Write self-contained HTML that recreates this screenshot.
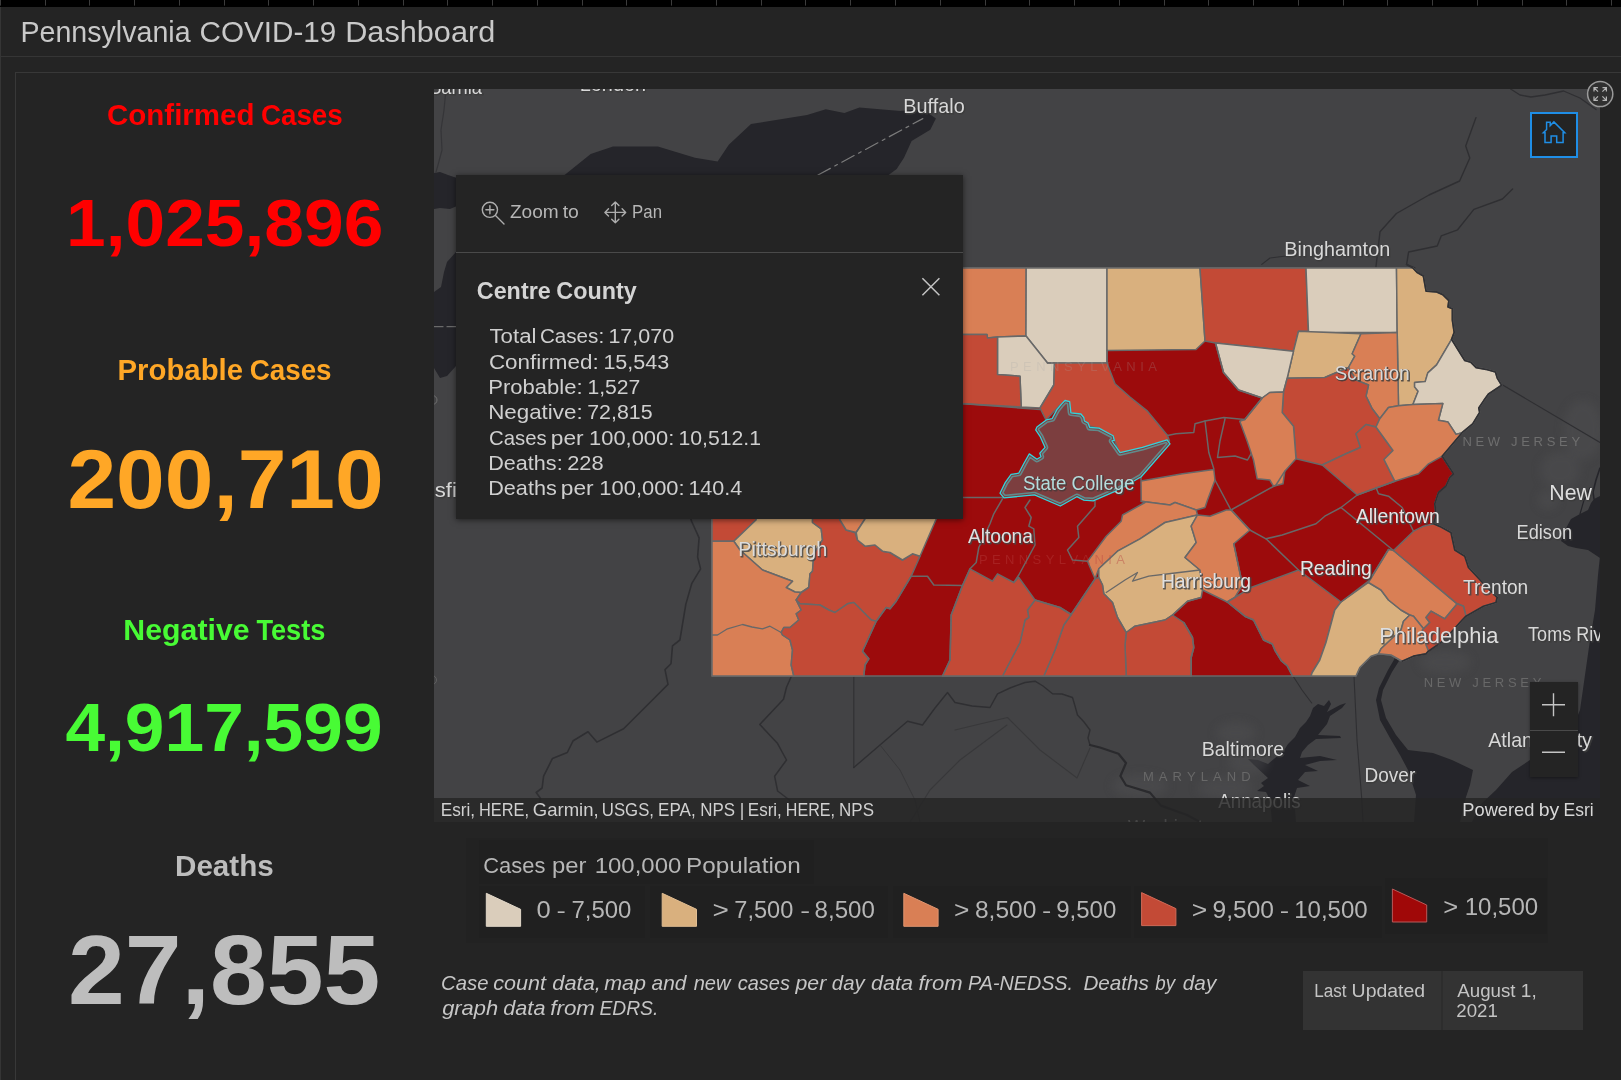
<!DOCTYPE html>
<html lang="en"><head><meta charset="utf-8"><title>Pennsylvania COVID-19 Dashboard</title>
<style>
html,body{margin:0;padding:0;background:#242424;}
body{width:1621px;height:1080px;overflow:hidden;position:relative;font-family:"Liberation Sans",sans-serif;color:#c8c8c8;}
.abs{position:absolute;}
#topbar{left:0;top:0;width:1621px;height:7px;background:#000;}
#header{left:0;top:7px;width:1621px;height:48px;background:#242424;border-bottom:1px solid #353535;border-left:1px solid #353535;box-sizing:border-box;height:50px;}
#panel{left:15px;top:72px;width:1620px;height:1020px;border:1px solid #383838;box-sizing:border-box;background:#242424;}
#map{left:434px;top:89px;width:1166px;height:733px;overflow:hidden;background:#434345;}
#map svg{opacity:0.999;}
#attr{left:434px;top:798px;width:1166px;height:24px;background:rgba(36,36,36,0.82);}
#popup{left:456px;top:175px;width:507px;height:344px;background:#242424;box-shadow:0 1px 6px rgba(0,0,0,0.55);}
#popup .div{position:absolute;left:0;top:77px;width:507px;height:1px;background:#4a4a4a;}
#home{left:1530px;top:112px;width:48px;height:46px;background:#242424;border:2px solid #1f8ee6;box-sizing:border-box;}
#zoom{left:1530px;top:682px;width:48px;height:95px;background:#242424;box-shadow:0 1px 3px rgba(0,0,0,0.4);}
#zoom .div{position:absolute;left:0;top:48px;width:48px;height:1px;background:#4a4a4a;}
#legend{left:466px;top:838px;width:1082px;height:105px;background:#222222;}
.lg{background:#202020;}
#lu1{left:1303px;top:971px;width:280px;height:59px;background:#333333;}
#lu2{left:1441px;top:971px;width:2px;height:59px;background:#2d2d2d;}
#lborder{left:0;top:7px;width:1px;height:1073px;background:#353535;}
svg text{font-family:"Liberation Sans",sans-serif;}
#ov{left:0;top:0;opacity:0.999;}
</style></head><body>

<div id="topbar" class="abs"></div><div id="lborder" class="abs"></div>
<div id="header" class="abs"></div>
<div id="panel" class="abs"></div>
<svg class="abs" style="left:0;top:0" width="1621" height="7"><rect x="0" y="0" width="1" height="5.6" fill="#3c3c3c"/><rect x="45" y="0" width="1" height="5.6" fill="#3c3c3c"/><rect x="89" y="0" width="1" height="5.6" fill="#3c3c3c"/><rect x="134" y="0" width="1" height="5.6" fill="#3c3c3c"/><rect x="179" y="0" width="1" height="5.6" fill="#3c3c3c"/><rect x="224" y="0" width="1" height="5.6" fill="#3c3c3c"/><rect x="268" y="0" width="1" height="5.6" fill="#3c3c3c"/><rect x="313" y="0" width="1" height="5.6" fill="#3c3c3c"/><rect x="358" y="0" width="1" height="5.6" fill="#3c3c3c"/><rect x="403" y="0" width="1" height="5.6" fill="#3c3c3c"/><rect x="447" y="0" width="1" height="5.6" fill="#3c3c3c"/><rect x="492" y="0" width="1" height="5.6" fill="#3c3c3c"/><rect x="537" y="0" width="1" height="5.6" fill="#3c3c3c"/><rect x="582" y="0" width="1" height="5.6" fill="#3c3c3c"/><rect x="626" y="0" width="1" height="5.6" fill="#3c3c3c"/><rect x="671" y="0" width="1" height="5.6" fill="#3c3c3c"/><rect x="716" y="0" width="1" height="5.6" fill="#3c3c3c"/><rect x="761" y="0" width="1" height="5.6" fill="#3c3c3c"/><rect x="805" y="0" width="1" height="5.6" fill="#3c3c3c"/><rect x="850" y="0" width="1" height="5.6" fill="#3c3c3c"/><rect x="895" y="0" width="1" height="5.6" fill="#3c3c3c"/><rect x="940" y="0" width="1" height="5.6" fill="#3c3c3c"/><rect x="985" y="0" width="1" height="5.6" fill="#3c3c3c"/><rect x="1029" y="0" width="1" height="5.6" fill="#3c3c3c"/><rect x="1074" y="0" width="1" height="5.6" fill="#3c3c3c"/><rect x="1119" y="0" width="1" height="5.6" fill="#3c3c3c"/><rect x="1164" y="0" width="1" height="5.6" fill="#3c3c3c"/><rect x="1208" y="0" width="1" height="5.6" fill="#3c3c3c"/><rect x="1253" y="0" width="1" height="5.6" fill="#3c3c3c"/><rect x="1298" y="0" width="1" height="5.6" fill="#3c3c3c"/><rect x="1343" y="0" width="1" height="5.6" fill="#3c3c3c"/><rect x="1387" y="0" width="1" height="5.6" fill="#3c3c3c"/><rect x="1432" y="0" width="1" height="5.6" fill="#3c3c3c"/><rect x="1477" y="0" width="1" height="5.6" fill="#3c3c3c"/><rect x="1522" y="0" width="1" height="5.6" fill="#3c3c3c"/><rect x="1566" y="0" width="1" height="5.6" fill="#3c3c3c"/><rect x="1611" y="0" width="1" height="5.6" fill="#3c3c3c"/></svg>
<div id="map" class="abs"><svg width="1166" height="733" viewBox="434 89 1166 733">
<defs><filter id="bl" x="-30%" y="-30%" width="160%" height="160%" color-interpolation-filters="sRGB"><feGaussianBlur stdDeviation="5"/></filter></defs>
<polygon points="434.0,292.0 441.0,287.0 444.0,272.0 447.0,262.0 456.0,252.0 500.0,222.0 564.6,175.0 590.7,154.0 613.0,146.6 657.9,146.6 695.0,157.8 717.6,161.5 728.8,144.7 751.0,124.0 807.0,114.9 825.8,109.3 844.4,113.0 859.4,107.4 900.4,111.0 922.8,109.3 935.9,118.6 930.3,129.8 911.6,141.0 904.0,157.8 896.7,169.0 881.8,180.0 760.0,262.0 600.0,340.0 456.0,366.0 447.0,376.0 440.0,378.0 434.0,368.0" fill="#25252a" stroke="none" stroke-width="0" stroke-linejoin="round" />
<polygon points="434.0,173.0 440.0,172.0 448.0,175.0 457.0,178.0 457.0,206.0 450.0,209.0 440.0,208.0 434.0,209.0" fill="#25252a" stroke="none" stroke-width="0" stroke-linejoin="round" />
<polyline points="818.0,175.0 922.8,118.6" fill="none" stroke="#7c7c7c" stroke-width="1.2" stroke-linejoin="round" stroke-linecap="round" stroke-dasharray="14 5 3 5"/>
<polyline points="434.0,326.7 456.0,326.7" fill="none" stroke="#6a6a6a" stroke-width="1.2" stroke-linejoin="round" stroke-linecap="round" stroke-dasharray="9 4"/>
<polyline points="446.0,89.0 444.0,110.0 441.0,130.0 442.0,150.0 438.0,165.0 436.0,172.0" fill="none" stroke="#353538" stroke-width="1.2" stroke-linejoin="round" stroke-linecap="round" />
<polygon points="1313.0,708.0 1318.0,704.0 1324.0,706.0 1329.0,700.0 1331.0,704.0 1327.0,712.0 1340.0,705.0 1346.0,703.0 1342.0,708.0 1330.0,716.0 1327.0,724.0 1322.0,730.0 1318.0,735.0 1340.0,736.0 1341.0,738.0 1316.0,739.0 1308.0,745.0 1302.0,752.0 1300.0,758.0 1320.0,756.0 1337.0,760.0 1320.0,761.0 1305.0,765.0 1318.0,771.0 1305.0,772.0 1298.0,780.0 1310.0,786.0 1297.0,788.0 1294.0,797.0 1296.0,822.0 1272.0,822.0 1270.0,800.0 1266.0,792.0 1257.0,791.0 1264.0,786.0 1261.0,783.0 1268.0,778.0 1254.0,765.0 1248.0,759.0 1258.0,760.0 1268.0,764.0 1275.0,758.0 1283.0,752.0 1288.0,744.0 1295.0,737.0 1300.0,728.0 1306.0,722.0 1310.0,716.0" fill="#25252a" stroke="none" stroke-width="0" stroke-linejoin="round" />
<polygon points="1399.0,661.0 1392.0,672.0 1383.0,690.0 1381.0,700.0 1386.0,718.0 1396.0,735.0 1408.0,750.0 1433.0,753.0 1452.0,760.0 1473.0,770.0 1470.0,785.0 1466.0,797.0 1460.0,822.0 1414.0,822.0 1416.0,795.0 1408.0,770.0 1400.0,755.0 1390.0,738.0 1380.0,720.0 1376.0,700.0 1379.0,688.0 1388.0,670.0 1395.0,658.0" fill="#25252a" stroke="none" stroke-width="0" stroke-linejoin="round" />
<polygon points="1600.0,556.0 1598.0,575.0 1595.0,610.0 1590.0,640.0 1585.0,675.0 1580.0,710.0 1572.0,730.0 1552.0,748.0 1530.0,760.0 1512.0,772.0 1496.0,790.0 1480.0,805.0 1472.0,822.0 1600.0,822.0" fill="#25252a" stroke="none" stroke-width="0" stroke-linejoin="round" />
<polygon points="1600.0,496.0 1594.0,499.0 1591.0,503.0 1588.0,510.0 1580.0,514.0 1571.0,519.0 1565.0,530.0 1561.0,541.0 1568.0,546.0 1576.0,548.0 1588.0,550.0 1594.0,554.0 1600.0,558.0" fill="#25252a" stroke="none" stroke-width="0" stroke-linejoin="round" />
<polyline points="1600.0,468.0 1596.0,480.0 1593.0,492.0 1594.0,499.0" fill="none" stroke="#25252a" stroke-width="1.6" stroke-linejoin="round" stroke-linecap="round" />
<polyline points="1580.0,514.0 1584.0,500.0 1590.0,488.0" fill="none" stroke="#25252a" stroke-width="1.2" stroke-linejoin="round" stroke-linecap="round" />
<g fill="#535355" opacity="0.38" filter="url(#bl)"><ellipse cx="1583" cy="430" rx="20" ry="30"/><ellipse cx="1560" cy="470" rx="20" ry="18"/><ellipse cx="1548" cy="500" rx="10" ry="10"/><ellipse cx="1236" cy="733" rx="20" ry="11"/><ellipse cx="1248" cy="762" rx="20" ry="13"/><ellipse cx="1225" cy="788" rx="28" ry="11"/><ellipse cx="1140" cy="786" rx="28" ry="12"/><ellipse cx="1445" cy="662" rx="26" ry="12"/></g>
<polyline points="1501.0,384.0 1600.0,442.5" fill="none" stroke="#2f2f32" stroke-width="1.2" stroke-linejoin="round" stroke-linecap="round" />
<polyline points="1476.0,117.6 1465.7,146.0 1469.8,158.0 1459.6,181.0 1429.0,195.0 1396.4,213.5 1380.0,231.8 1376.0,266.5" fill="none" stroke="#2f2f32" stroke-width="1.4" stroke-linejoin="round" stroke-linecap="round" />
<polyline points="1512.6,189.0 1502.4,199.0 1473.9,209.4 1457.6,229.8 1441.2,235.9 1437.2,246.0 1408.6,252.0 1406.6,264.4 1414.8,268.0" fill="none" stroke="#2f2f32" stroke-width="1.4" stroke-linejoin="round" stroke-linecap="round" />
<polyline points="1261.8,264.4 1270.0,258.0 1286.0,256.0" fill="none" stroke="#2f2f32" stroke-width="1.2" stroke-linejoin="round" stroke-linecap="round" />
<polyline points="1510.6,89.0 1520.0,95.0 1531.0,97.0 1545.0,95.0 1563.6,91.0 1580.0,98.0 1596.0,109.5" fill="none" stroke="#2f2f32" stroke-width="1.3" stroke-linejoin="round" stroke-linecap="round" />
<polyline points="688.0,510.0 691.7,521.5 699.1,537.8 697.6,557.0 700.6,568.9 691.7,583.7 685.8,604.4 679.9,640.0 672.5,645.9 671.0,663.7 665.0,669.6 668.0,684.4 653.2,699.2 638.4,714.0 623.6,728.8 596.9,742.1 588.0,731.8 573.2,740.7 567.3,752.5 552.5,758.4 543.6,776.2 542.1,788.0 536.2,792.5 540.6,798.4 538.0,810.0" fill="none" stroke="#2f2f32" stroke-width="1.6" stroke-linejoin="round" stroke-linecap="round" />
<polyline points="853.8,676.0 853.8,767.5" fill="none" stroke="#2f2f32" stroke-width="1.1" stroke-linejoin="round" stroke-linecap="round" />
<polyline points="791.5,676.0 786.5,687.3 783.5,699.2 759.8,724.4 777.6,743.6 786.5,760.0 774.6,776.2 777.6,791.0 789.4,800.0 795.0,815.0" fill="none" stroke="#2f2f32" stroke-width="1.5" stroke-linejoin="round" stroke-linecap="round" />
<polyline points="853.8,767.5 880.0,745.0 907.5,721.2 922.5,725.0 935.0,708.0 947.5,692.5 955.0,702.5 972.0,706.0 990.0,707.5 997.5,693.8 1010.0,688.0 1025.0,682.5 1035.0,681.2 1043.0,686.0 1052.5,693.8 1062.0,694.0 1072.5,697.5 1075.0,706.0 1077.5,715.0 1084.0,722.0 1090.0,730.0 1088.0,738.0 1090.0,745.0" fill="none" stroke="#2f2f32" stroke-width="1.4" stroke-linejoin="round" stroke-linecap="round" />
<polyline points="1090.0,745.0 1100.0,747.5 1118.5,753.7 1126.0,763.0 1120.4,776.0 1126.0,785.2 1150.0,792.6 1161.0,805.6 1187.0,815.0 1200.0,822.0" fill="none" stroke="#2a2a2d" stroke-width="2.2" stroke-linejoin="round" stroke-linecap="round" />
<polyline points="955.0,730.0 980.0,724.0 1007.5,717.5 1040.0,750.0 1077.0,778.0 1090.0,748.0" fill="none" stroke="#38383a" stroke-width="1.1" stroke-linejoin="round" stroke-linecap="round" />
<polyline points="1007.0,725.0 960.0,760.0 930.0,790.0 910.0,822.0" fill="none" stroke="#38383a" stroke-width="1.1" stroke-linejoin="round" stroke-linecap="round" />
<polyline points="880.0,745.0 900.0,770.0 915.0,800.0 920.0,822.0" fill="none" stroke="#38383a" stroke-width="1.0" stroke-linejoin="round" stroke-linecap="round" />
<polyline points="1354.0,676.0 1357.0,740.0 1361.7,798.0 1363.0,822.0" fill="none" stroke="#2f2f32" stroke-width="1.1" stroke-linejoin="round" stroke-linecap="round" />
<polyline points="1293.0,676.0 1302.0,690.0 1311.7,703.0" fill="none" stroke="#2f2f32" stroke-width="1.1" stroke-linejoin="round" stroke-linecap="round" />
<circle cx="432.5" cy="400" r="4.5" fill="none" stroke="#707070" stroke-width="1"/><circle cx="432" cy="680" r="4.5" fill="none" stroke="#606060" stroke-width="1"/>
<polygon points="712.0,268.0 1412.9,268.0 1417.3,272.6 1423.4,276.1 1426.1,291.1 1436.6,291.9 1442.8,294.6 1448.9,300.7 1448.0,306.9 1452.4,308.7 1452.4,320.1 1454.2,332.4 1451.6,339.4 1460.4,353.5 1464.8,360.5 1470.9,362.3 1476.2,367.6 1485.9,369.3 1495.5,372.0 1497.3,378.1 1501.7,385.2 1488.5,394.0 1484.1,400.1 1478.8,408.0 1479.7,412.4 1472.7,423.9 1462.1,432.7 1442.2,456.2 1453.5,473.8 1449.8,477.5 1446.0,486.0 1438.5,492.5 1434.8,503.8 1436.0,515.0 1433.5,523.8 1441.0,527.0 1451.0,532.5 1454.8,550.0 1464.8,556.2 1468.5,567.5 1484.8,585.0 1497.2,597.5 1496.0,602.5 1483.5,606.2 1466.0,616.2 1462.2,620.0 1451.0,632.5 1441.0,642.5 1428.5,651.2 1426.0,653.8 1413.5,656.2 1402.2,661.2 1391.0,655.0 1378.5,653.8 1371.0,656.2 1359.8,667.5 1356.0,676.0 712.0,676.0" fill="#9c0b0c" stroke="#686868" stroke-width="1.6" stroke-linejoin="round" />
<polygon points="960.0,268.0 1026.2,268.0 1026.0,336.0 997.5,337.0 987.5,338.0 987.0,334.5 960.0,334.5" fill="#d97f55" stroke="#686868" stroke-width="1.5" stroke-linejoin="round" />
<polygon points="1026.2,268.0 1107.0,268.0 1107.0,363.0 1047.5,363.0 1026.0,336.0" fill="#dacdbb" stroke="#686868" stroke-width="1.5" stroke-linejoin="round" />
<polygon points="1107.0,268.0 1200.0,268.0 1205.0,341.0 1196.0,349.5 1107.0,350.5" fill="#d9b07e" stroke="#686868" stroke-width="1.5" stroke-linejoin="round" />
<polygon points="1200.0,268.0 1306.0,268.0 1308.5,331.2 1298.5,331.2 1293.5,351.2 1215.5,343.0 1205.0,341.0" fill="#c34a36" stroke="#686868" stroke-width="1.5" stroke-linejoin="round" />
<polygon points="1306.0,268.0 1396.5,268.0 1397.2,332.5 1308.5,332.5" fill="#dacdbb" stroke="#686868" stroke-width="1.5" stroke-linejoin="round" />
<polygon points="1396.5,268.0 1412.9,268.0 1417.3,272.6 1423.4,276.1 1426.1,291.1 1436.6,291.9 1442.8,294.6 1448.9,300.7 1448.0,306.9 1452.4,308.7 1452.4,320.1 1454.2,332.4 1451.6,339.4 1436.6,364.9 1427.8,372.9 1425.2,381.6 1414.6,382.5 1414.6,386.9 1418.1,391.3 1412.9,404.5 1398.5,405.8 1397.2,332.5" fill="#d9b07e" stroke="#686868" stroke-width="1.5" stroke-linejoin="round" />
<polygon points="1451.6,339.4 1460.4,353.5 1464.8,360.5 1470.9,362.3 1476.2,367.6 1485.9,369.3 1495.5,372.0 1497.3,378.1 1501.7,385.2 1488.5,394.0 1484.1,400.1 1478.8,408.0 1479.7,412.4 1472.7,423.9 1462.1,432.7 1456.0,434.4 1448.0,422.1 1438.4,420.3 1442.8,403.6 1412.9,404.5 1418.1,391.3 1414.6,386.9 1414.6,382.5 1425.2,381.6 1427.8,372.9 1436.6,364.9" fill="#dacdbb" stroke="#686868" stroke-width="1.5" stroke-linejoin="round" />
<polygon points="1298.5,331.2 1361.0,333.8 1352.2,353.8 1354.8,356.2 1348.5,367.5 1324.8,377.5 1287.2,378.2 1293.5,351.2" fill="#d9b07e" stroke="#686868" stroke-width="1.5" stroke-linejoin="round" />
<polygon points="1361.0,333.8 1397.2,332.5 1398.5,405.8 1388.5,407.5 1379.8,418.8 1372.2,408.8 1366.0,396.2 1368.5,385.0 1356.0,380.0 1348.5,367.5 1354.8,356.2 1352.2,353.8" fill="#d97f55" stroke="#686868" stroke-width="1.5" stroke-linejoin="round" />
<polygon points="1215.5,343.0 1293.5,351.2 1287.2,378.2 1283.5,392.0 1269.8,392.5 1262.2,398.0 1238.5,390.0 1223.5,372.5" fill="#dacdbb" stroke="#686868" stroke-width="1.5" stroke-linejoin="round" />
<polygon points="1287.2,378.2 1324.8,377.5 1348.5,367.5 1356.0,380.0 1368.5,385.0 1366.0,396.2 1372.2,408.8 1379.8,418.8 1376.0,427.0 1366.0,424.5 1356.0,433.8 1360.5,447.5 1346.0,453.8 1322.2,465.0 1296.0,458.8 1293.5,426.2 1282.2,412.5 1283.5,392.0" fill="#c34a36" stroke="#686868" stroke-width="1.5" stroke-linejoin="round" />
<polygon points="1262.2,398.0 1269.8,392.5 1283.5,392.0 1282.2,412.5 1293.5,426.2 1296.0,458.8 1284.8,471.2 1283.0,483.8 1273.5,486.2 1269.8,480.0 1257.2,478.8 1253.5,460.0 1247.2,441.2 1239.8,421.2 1244.8,419.5" fill="#d97f55" stroke="#686868" stroke-width="1.5" stroke-linejoin="round" />
<polygon points="1366.0,424.5 1376.0,427.0 1393.0,450.5 1384.0,459.5 1394.8,481.2 1357.2,495.0 1322.2,465.0 1346.0,453.8 1360.5,447.5 1356.0,433.8" fill="#c34a36" stroke="#686868" stroke-width="1.5" stroke-linejoin="round" />
<polygon points="1376.0,427.0 1379.8,418.8 1388.5,407.5 1398.5,405.8 1412.9,404.5 1442.8,403.6 1438.4,420.3 1448.0,422.1 1456.0,434.4 1462.1,432.7 1442.2,456.2 1428.5,463.8 1418.5,473.8 1394.8,481.2 1384.0,459.5 1393.0,450.5" fill="#d97f55" stroke="#686868" stroke-width="1.5" stroke-linejoin="round" />
<polygon points="997.5,337.0 1026.0,336.0 1047.5,363.0 1054.5,363.0 1053.8,385.0 1040.0,408.0 1021.2,407.0 1020.0,376.2 997.5,374.5" fill="#dacdbb" stroke="#686868" stroke-width="1.5" stroke-linejoin="round" />
<polygon points="960.0,334.5 987.0,334.5 987.5,338.0 997.5,337.0 997.5,374.5 1020.0,376.2 1021.2,407.0 960.0,403.5" fill="#c34a36" stroke="#686868" stroke-width="1.5" stroke-linejoin="round" />
<polygon points="1047.5,363.0 1107.0,363.0 1115.0,383.8 1130.0,397.0 1147.5,411.2 1167.5,435.5 1169.5,441.0 1120.0,453.8 1113.8,438.8 1100.0,428.8 1086.0,425.0 1080.0,415.0 1070.0,412.5 1066.0,401.0 1060.0,405.0 1046.0,420.0 1040.0,408.0 1053.8,385.0 1054.5,363.0" fill="#c34a36" stroke="#686868" stroke-width="1.5" stroke-linejoin="round" />
<polygon points="1141.0,481.0 1182.5,473.8 1213.8,469.5 1215.0,480.0 1207.5,500.0 1205.0,507.5 1196.2,510.0 1175.0,502.5 1170.0,505.0 1141.2,501.2" fill="#d97f55" stroke="#686868" stroke-width="1.5" stroke-linejoin="round" />
<polygon points="1141.2,501.2 1170.0,505.0 1175.0,502.5 1196.2,510.0 1197.5,515.0 1165.0,522.5 1140.0,538.8 1117.5,551.2 1098.8,568.8 1095.0,578.8 1087.5,561.2 1106.2,536.2 1121.2,521.2 1122.5,515.0 1145.0,502.5" fill="#d97f55" stroke="#686868" stroke-width="1.5" stroke-linejoin="round" />
<polygon points="1098.8,577.5 1098.8,568.8 1117.5,551.2 1140.0,538.8 1165.0,522.5 1197.5,515.0 1191.2,526.2 1196.2,542.5 1185.0,557.5 1200.0,570.0 1202.5,590.0 1201.2,597.5 1187.5,601.2 1172.5,615.0 1165.0,620.0 1135.0,626.2 1126.2,632.5 1117.5,617.5 1112.5,602.5 1103.8,593.8 1102.5,585.0" fill="#d9b07e" stroke="#686868" stroke-width="1.5" stroke-linejoin="round" />
<polyline points="1106.2,592.5 1125.0,580.0 1137.5,572.5 1132.5,581.2 1148.8,576.2 1175.0,573.0 1200.0,570.0" fill="none" stroke="#686868" stroke-width="1.3" stroke-linejoin="round" stroke-linecap="round" />
<polygon points="1197.5,515.0 1210.0,516.2 1226.2,510.0 1231.2,510.0 1250.0,530.0 1233.8,543.8 1242.5,585.0 1234.8,597.5 1227.2,602.0 1202.5,590.0 1200.0,570.0 1185.0,557.5 1196.2,542.5 1191.2,526.2" fill="#d97f55" stroke="#686868" stroke-width="1.5" stroke-linejoin="round" />
<polygon points="1227.2,602.0 1234.8,597.5 1251.0,587.5 1298.5,570.0 1341.0,602.0 1334.8,610.0 1326.0,642.5 1319.8,660.0 1312.2,672.5 1311.0,676.0 1292.5,676.0 1287.1,665.7 1281.2,660.7 1275.2,650.9 1272.3,644.0 1263.5,640.0 1253.5,620.0 1244.8,616.2" fill="#c34a36" stroke="#686868" stroke-width="1.5" stroke-linejoin="round" />
<polygon points="1368.5,582.5 1381.0,590.0 1388.5,600.0 1401.0,610.0 1409.8,615.0 1403.5,621.2 1401.0,630.0 1381.0,648.8 1378.5,653.8 1371.0,656.2 1359.8,667.5 1356.0,676.0 1311.0,676.0 1312.2,672.5 1319.8,660.0 1326.0,642.5 1334.8,610.0 1341.0,602.0" fill="#d9b07e" stroke="#686868" stroke-width="1.5" stroke-linejoin="round" />
<polygon points="1388.5,549.5 1393.5,550.5 1457.2,603.8 1444.8,618.8 1431.0,611.2 1426.0,617.5 1429.8,622.5 1423.5,628.8 1413.5,616.2 1409.8,615.0 1401.0,610.0 1388.5,600.0 1381.0,590.0 1368.5,582.5 1369.8,580.0" fill="#d97f55" stroke="#686868" stroke-width="1.5" stroke-linejoin="round" />
<polygon points="1413.5,531.2 1423.5,526.2 1433.5,523.8 1441.0,527.0 1451.0,532.5 1454.8,550.0 1464.8,556.2 1468.5,567.5 1484.8,585.0 1497.2,597.5 1496.0,602.5 1483.5,606.2 1466.0,616.2 1463.5,606.2 1457.2,603.8 1393.5,550.5" fill="#c34a36" stroke="#686868" stroke-width="1.5" stroke-linejoin="round" />
<polygon points="1457.2,603.8 1463.5,606.2 1466.0,616.2 1462.2,620.0 1451.0,632.5 1441.0,642.5 1428.5,651.2 1426.0,645.0 1422.2,630.0 1423.5,628.8 1429.8,622.5 1426.0,617.5 1431.0,611.2 1444.8,618.8" fill="#c34a36" stroke="#686868" stroke-width="1.5" stroke-linejoin="round" />
<polygon points="1409.8,615.0 1413.5,616.2 1423.5,628.8 1422.2,630.0 1426.0,645.0 1428.5,651.2 1426.0,653.8 1413.5,656.2 1402.2,661.2 1391.0,655.0 1378.5,653.8 1381.0,648.8 1401.0,630.0 1403.5,621.2" fill="#d97f55" stroke="#686868" stroke-width="1.5" stroke-linejoin="round" />
<polygon points="1126.2,632.5 1135.0,626.2 1165.0,620.0 1172.5,615.0 1183.8,622.5 1192.5,637.5 1193.8,647.5 1191.2,657.5 1191.2,676.0 1126.2,676.0 1125.0,645.0" fill="#c34a36" stroke="#686868" stroke-width="1.5" stroke-linejoin="round" />
<polygon points="1071.2,614.5 1095.0,578.8 1098.8,577.5 1102.5,585.0 1103.8,593.8 1112.5,602.5 1117.5,617.5 1126.2,632.5 1125.0,645.0 1126.2,676.0 1043.8,676.0 1055.0,650.0 1063.8,625.0" fill="#c34a36" stroke="#686868" stroke-width="1.5" stroke-linejoin="round" />
<polygon points="1035.0,600.0 1060.0,607.5 1071.2,614.5 1063.8,625.0 1055.0,650.0 1043.8,676.0 1002.5,676.0 1020.0,642.5 1025.0,620.0 1028.8,617.5 1027.5,610.0" fill="#c34a36" stroke="#686868" stroke-width="1.5" stroke-linejoin="round" />
<polygon points="970.0,568.8 992.5,581.2 997.5,573.8 1013.8,582.5 1018.8,577.5 1035.0,600.0 1027.5,610.0 1028.8,617.5 1025.0,620.0 1020.0,642.5 1002.5,676.0 942.5,676.0 950.0,660.0 951.2,615.0 962.5,585.5" fill="#c34a36" stroke="#686868" stroke-width="1.5" stroke-linejoin="round" />
<polygon points="712.0,500.0 760.0,500.0 756.0,520.0 733.8,541.2 712.0,541.2" fill="#c34a36" stroke="#686868" stroke-width="1.5" stroke-linejoin="round" />
<polygon points="756.0,520.0 760.0,500.0 813.0,500.0 812.5,522.5 821.2,528.8 822.5,540.0 813.8,553.8 812.5,571.2 810.0,573.8 808.8,587.5 801.2,592.5 795.0,592.0 786.2,587.5 792.5,581.2 762.5,570.0 740.0,550.0 733.8,541.2" fill="#d9b07e" stroke="#686868" stroke-width="1.5" stroke-linejoin="round" />
<polygon points="712.0,541.2 733.8,541.2 740.0,550.0 762.5,570.0 792.5,581.2 786.2,587.5 795.0,592.0 801.2,592.5 796.2,600.0 801.2,610.0 796.2,613.8 798.8,620.0 790.0,627.5 783.8,627.5 781.2,632.5 782.5,635.0 790.0,640.0 792.5,650.0 791.2,665.0 793.8,676.0 712.0,676.0" fill="#d97f55" stroke="#686868" stroke-width="1.5" stroke-linejoin="round" />
<polyline points="712.0,635.0 717.5,635.0 727.5,628.8 742.5,624.5 752.0,627.0 762.5,628.8 770.0,626.2 781.2,632.5" fill="none" stroke="#686868" stroke-width="1.3" stroke-linejoin="round" stroke-linecap="round" />
<polygon points="813.0,500.0 840.0,500.0 840.0,520.0 846.2,530.0 855.0,532.5 857.5,540.0 865.0,546.2 875.0,545.0 882.5,551.2 890.0,552.5 902.5,560.0 912.5,553.8 920.0,556.2 911.2,576.2 896.2,601.2 890.0,608.8 886.2,607.5 876.2,621.2 871.2,620.0 853.8,602.5 847.5,603.8 835.0,612.5 828.8,610.0 820.0,605.0 800.0,603.8 796.2,600.0 801.2,592.5 808.8,587.5 810.0,573.8 812.5,571.2 813.8,553.8 822.5,540.0 821.2,528.8 812.5,522.5" fill="#c34a36" stroke="#686868" stroke-width="1.5" stroke-linejoin="round" />
<polygon points="840.0,500.0 868.0,500.0 865.0,519.0 856.2,532.5 846.2,530.0 840.0,520.0" fill="#d97f55" stroke="#686868" stroke-width="1.5" stroke-linejoin="round" />
<polygon points="868.0,500.0 945.0,500.0 936.2,519.0 920.0,556.2 912.5,553.8 902.5,560.0 890.0,552.5 882.5,551.2 875.0,545.0 865.0,546.2 857.5,540.0 856.2,532.5 865.0,519.0" fill="#d9b07e" stroke="#686868" stroke-width="1.5" stroke-linejoin="round" />
<polygon points="800.0,603.8 820.0,605.0 828.8,610.0 835.0,612.5 847.5,603.8 853.8,602.5 871.2,620.0 876.2,621.2 862.5,651.2 868.8,658.8 865.0,665.0 863.8,676.0 793.8,676.0 791.2,665.0 792.5,650.0 790.0,640.0 782.5,635.0 781.2,632.5 783.8,627.5 790.0,627.5 798.8,620.0 796.2,613.8 801.2,610.0 796.2,600.0" fill="#c34a36" stroke="#686868" stroke-width="1.5" stroke-linejoin="round" />
<polyline points="960.0,403.5 1040.0,409.5" fill="none" stroke="#686868" stroke-width="1.5" stroke-linejoin="round" stroke-linecap="round" />
<polyline points="960.0,497.5 1002.5,497.5" fill="none" stroke="#686868" stroke-width="1.5" stroke-linejoin="round" stroke-linecap="round" />
<polyline points="1002.5,498.8 993.8,513.8 990.0,523.8 978.8,547.5 976.2,562.5 970.0,568.8 962.5,585.5" fill="none" stroke="#686868" stroke-width="1.5" stroke-linejoin="round" stroke-linecap="round" />
<polyline points="911.2,576.2 927.5,576.2 933.8,585.0 962.5,585.5" fill="none" stroke="#686868" stroke-width="1.5" stroke-linejoin="round" stroke-linecap="round" />
<polyline points="962.5,585.5 951.2,615.0 950.0,660.0 942.5,676.0" fill="none" stroke="#686868" stroke-width="1.5" stroke-linejoin="round" stroke-linecap="round" />
<polyline points="1030.0,500.0 1025.0,507.5 1031.2,517.5 1028.8,526.2 1033.8,528.8 1035.0,545.0 1018.8,575.0 1013.8,582.5" fill="none" stroke="#686868" stroke-width="1.5" stroke-linejoin="round" stroke-linecap="round" />
<polyline points="1095.0,501.2 1095.0,506.2 1077.5,526.2 1078.8,537.5 1067.5,550.0 1072.5,560.0 1087.5,561.2" fill="none" stroke="#686868" stroke-width="1.5" stroke-linejoin="round" stroke-linecap="round" />
<polyline points="1035.0,600.0 1060.0,607.5 1071.2,614.5 1095.0,578.8" fill="none" stroke="#686868" stroke-width="1.5" stroke-linejoin="round" stroke-linecap="round" />
<polyline points="1107.0,350.5 1107.0,363.0" fill="none" stroke="#686868" stroke-width="1.5" stroke-linejoin="round" stroke-linecap="round" />
<polyline points="1215.5,343.0 1223.5,372.5 1238.5,390.0 1262.2,398.0 1244.8,419.5 1223.8,417.5 1205.0,421.0 1195.0,423.8 1193.8,432.5 1176.0,433.8 1167.5,435.5" fill="none" stroke="#686868" stroke-width="1.5" stroke-linejoin="round" stroke-linecap="round" />
<polyline points="1205.0,421.0 1208.8,452.5 1213.8,468.8" fill="none" stroke="#686868" stroke-width="1.5" stroke-linejoin="round" stroke-linecap="round" />
<polyline points="1141.0,480.0 1141.0,476.0" fill="none" stroke="#686868" stroke-width="1.5" stroke-linejoin="round" stroke-linecap="round" />
<polyline points="1225.0,418.8 1220.0,441.0 1217.5,457.5 1235.0,456.0 1247.5,460.0 1251.0,453.8" fill="none" stroke="#686868" stroke-width="1.5" stroke-linejoin="round" stroke-linecap="round" />
<polyline points="1215.0,480.0 1231.0,510.0" fill="none" stroke="#686868" stroke-width="1.5" stroke-linejoin="round" stroke-linecap="round" />
<polyline points="1231.0,510.0 1276.0,485.0 1284.8,471.2" fill="none" stroke="#686868" stroke-width="1.5" stroke-linejoin="round" stroke-linecap="round" />
<polyline points="1231.2,510.0 1249.8,530.0 1266.0,538.8 1282.2,535.0 1316.0,523.8 1324.8,516.2 1341.0,507.5 1357.2,495.0" fill="none" stroke="#686868" stroke-width="1.5" stroke-linejoin="round" stroke-linecap="round" />
<polyline points="1266.0,538.8 1298.5,570.0" fill="none" stroke="#686868" stroke-width="1.5" stroke-linejoin="round" stroke-linecap="round" />
<polyline points="1233.8,543.8 1242.5,585.0" fill="none" stroke="#686868" stroke-width="1.5" stroke-linejoin="round" stroke-linecap="round" />
<polyline points="1341.0,507.5 1393.5,550.5" fill="none" stroke="#686868" stroke-width="1.5" stroke-linejoin="round" stroke-linecap="round" />
<polyline points="1388.5,549.5 1369.8,580.0 1341.0,602.0" fill="none" stroke="#686868" stroke-width="1.5" stroke-linejoin="round" stroke-linecap="round" />
<polyline points="1376.0,487.5 1378.5,493.8 1388.5,496.2 1402.2,507.5 1413.5,531.2" fill="none" stroke="#686868" stroke-width="1.5" stroke-linejoin="round" stroke-linecap="round" />
<polyline points="1394.8,481.2 1357.2,495.0" fill="none" stroke="#686868" stroke-width="1.5" stroke-linejoin="round" stroke-linecap="round" />
<polyline points="1172.5,615.0 1187.5,601.2 1201.2,597.5" fill="none" stroke="#686868" stroke-width="1.5" stroke-linejoin="round" stroke-linecap="round" />
<polyline points="1227.2,602.0 1244.8,616.2 1253.5,620.0 1263.5,640.0 1272.3,644.0 1275.2,650.9 1281.2,660.7 1287.1,665.7 1292.5,676.0" fill="none" stroke="#686868" stroke-width="1.5" stroke-linejoin="round" stroke-linecap="round" />
<polyline points="1183.8,622.5 1192.5,637.5 1193.8,647.5 1191.2,657.5 1191.2,676.0" fill="none" stroke="#686868" stroke-width="1.5" stroke-linejoin="round" stroke-linecap="round" />
<polyline points="911.2,576.2 896.2,601.2 890.0,608.8 886.2,607.5 876.2,621.2 862.5,651.2 868.8,658.8 865.0,665.0 863.8,676.0" fill="none" stroke="#686868" stroke-width="1.5" stroke-linejoin="round" stroke-linecap="round" />
<polyline points="1406.6,264.4 1412.9,268.0 1417.3,272.6 1423.4,276.1 1426.1,291.1 1436.6,291.9 1442.8,294.6 1448.9,300.7 1448.0,306.9 1452.4,308.7 1452.4,320.1 1454.2,332.4 1451.6,339.4 1460.4,353.5 1464.8,360.5 1470.9,362.3 1476.2,367.6 1485.9,369.3 1495.5,372.0 1497.3,378.1 1501.7,385.2 1488.5,394.0 1484.1,400.1 1478.8,408.0 1479.7,412.4 1472.7,423.9 1462.1,432.7 1442.2,456.2 1453.5,473.8 1449.8,477.5 1446.0,486.0 1438.5,492.5 1434.8,503.8 1436.0,515.0 1433.5,523.8 1441.0,527.0 1451.0,532.5 1454.8,550.0 1464.8,556.2 1468.5,567.5 1484.8,585.0 1497.2,597.5 1496.0,602.5 1483.5,606.2 1466.0,616.2 1462.2,620.0 1451.0,632.5 1441.0,642.5 1428.5,651.2 1426.0,653.8 1413.5,656.2 1402.2,661.2" fill="none" stroke="#313134" stroke-width="1.7" stroke-linejoin="round" stroke-linecap="round" />
<clipPath id="cc"><polygon points="1065.0,400.5 1069.7,401.7 1070.9,412.9 1080.9,414.0 1083.8,417.5 1084.4,421.0 1087.9,422.8 1089.7,427.5 1099.0,428.1 1113.1,435.7 1114.3,440.4 1111.9,441.0 1120.1,452.7 1142.4,447.4 1167.0,439.8 1170.0,443.9 1141.2,476.8 1119.0,489.6 1093.2,500.8 1083.8,500.2 1076.8,496.7 1060.3,506.0 1034.5,494.9 1004.0,497.9 1000.0,493.2 1005.2,482.6 1011.1,474.4 1018.7,473.2 1024.0,463.3 1029.3,453.9 1036.9,459.2 1041.0,456.8 1039.8,453.3 1045.1,447.4 1040.4,436.9 1035.7,429.9 1036.9,426.9 1046.3,419.9 1052.1,418.7 1056.8,409.9 1061.5,404.1"/></clipPath>
<polygon points="1065.0,400.5 1069.7,401.7 1070.9,412.9 1080.9,414.0 1083.8,417.5 1084.4,421.0 1087.9,422.8 1089.7,427.5 1099.0,428.1 1113.1,435.7 1114.3,440.4 1111.9,441.0 1120.1,452.7 1142.4,447.4 1167.0,439.8 1170.0,443.9 1141.2,476.8 1119.0,489.6 1093.2,500.8 1083.8,500.2 1076.8,496.7 1060.3,506.0 1034.5,494.9 1004.0,497.9 1000.0,493.2 1005.2,482.6 1011.1,474.4 1018.7,473.2 1024.0,463.3 1029.3,453.9 1036.9,459.2 1041.0,456.8 1039.8,453.3 1045.1,447.4 1040.4,436.9 1035.7,429.9 1036.9,426.9 1046.3,419.9 1052.1,418.7 1056.8,409.9 1061.5,404.1" fill="#7c3e3f" stroke="none" stroke-width="0" stroke-linejoin="round" />
<polygon points="1065.0,400.5 1069.7,401.7 1070.9,412.9 1080.9,414.0 1083.8,417.5 1084.4,421.0 1087.9,422.8 1089.7,427.5 1099.0,428.1 1113.1,435.7 1114.3,440.4 1111.9,441.0 1120.1,452.7 1142.4,447.4 1167.0,439.8 1170.0,443.9 1141.2,476.8 1119.0,489.6 1093.2,500.8 1083.8,500.2 1076.8,496.7 1060.3,506.0 1034.5,494.9 1004.0,497.9 1000.0,493.2 1005.2,482.6 1011.1,474.4 1018.7,473.2 1024.0,463.3 1029.3,453.9 1036.9,459.2 1041.0,456.8 1039.8,453.3 1045.1,447.4 1040.4,436.9 1035.7,429.9 1036.9,426.9 1046.3,419.9 1052.1,418.7 1056.8,409.9 1061.5,404.1" fill="none" stroke="#58a4a6" stroke-width="6.4" stroke-opacity="0.75" clip-path="url(#cc)" stroke-linejoin="round"/>
<polygon points="1065.0,400.5 1069.7,401.7 1070.9,412.9 1080.9,414.0 1083.8,417.5 1084.4,421.0 1087.9,422.8 1089.7,427.5 1099.0,428.1 1113.1,435.7 1114.3,440.4 1111.9,441.0 1120.1,452.7 1142.4,447.4 1167.0,439.8 1170.0,443.9 1141.2,476.8 1119.0,489.6 1093.2,500.8 1083.8,500.2 1076.8,496.7 1060.3,506.0 1034.5,494.9 1004.0,497.9 1000.0,493.2 1005.2,482.6 1011.1,474.4 1018.7,473.2 1024.0,463.3 1029.3,453.9 1036.9,459.2 1041.0,456.8 1039.8,453.3 1045.1,447.4 1040.4,436.9 1035.7,429.9 1036.9,426.9 1046.3,419.9 1052.1,418.7 1056.8,409.9 1061.5,404.1" fill="none" stroke="#7c3e3f" stroke-width="3.2" clip-path="url(#cc)" stroke-linejoin="round"/>
<polygon points="1065.0,400.5 1069.7,401.7 1070.9,412.9 1080.9,414.0 1083.8,417.5 1084.4,421.0 1087.9,422.8 1089.7,427.5 1099.0,428.1 1113.1,435.7 1114.3,440.4 1111.9,441.0 1120.1,452.7 1142.4,447.4 1167.0,439.8 1170.0,443.9 1141.2,476.8 1119.0,489.6 1093.2,500.8 1083.8,500.2 1076.8,496.7 1060.3,506.0 1034.5,494.9 1004.0,497.9 1000.0,493.2 1005.2,482.6 1011.1,474.4 1018.7,473.2 1024.0,463.3 1029.3,453.9 1036.9,459.2 1041.0,456.8 1039.8,453.3 1045.1,447.4 1040.4,436.9 1035.7,429.9 1036.9,426.9 1046.3,419.9 1052.1,418.7 1056.8,409.9 1061.5,404.1" fill="none" stroke="#36d2da" stroke-width="1.3" stroke-linejoin="round"/>
<text x="1009.93" y="370.50" font-size="13" fill="#a8a8a8" letter-spacing="4.48" opacity="0.22">PENNSYLVANIA</text>
<text x="978.93" y="563.50" font-size="13" fill="#b84040" letter-spacing="4.39" opacity="0.4">PENNSYLVANIA</text>
<text x="1462.43" y="446.25" font-size="13" fill="#6e6e6e" letter-spacing="3.68" opacity="1">NEW JERSEY</text>
<text x="1423.68" y="686.50" font-size="13" fill="#686868" letter-spacing="3.68" opacity="1">NEW JERSEY</text>
<text x="1142.93" y="780.70" font-size="13" fill="#686868" letter-spacing="5.10" opacity="1">MARYLAND</text>
<text transform="translate(430.28,94.60) scale(0.9131,1)" font-size="20" fill="#3c3c3c" stroke="#3c3c3c" stroke-width="0.9" opacity="0.85">Sarnia</text>
<text transform="translate(429.18,93.50) scale(0.9131,1)" font-size="20" fill="#d8d8d8">Sarnia</text>
<text transform="translate(580.86,92.10) scale(0.9937,1)" font-size="20" fill="#3c3c3c" stroke="#3c3c3c" stroke-width="0.9" opacity="0.85">London</text>
<text transform="translate(579.76,91.00) scale(0.9937,1)" font-size="20" fill="#d8d8d8">London</text>
<text transform="translate(904.46,114.10) scale(0.9924,1)" font-size="20" fill="#3c3c3c" stroke="#3c3c3c" stroke-width="0.9" opacity="0.85">Buffalo</text>
<text transform="translate(903.36,113.00) scale(0.9924,1)" font-size="20" fill="#d8d8d8">Buffalo</text>
<text transform="translate(1285.46,256.60) scale(0.9923,1)" font-size="20" fill="#3c3c3c" stroke="#3c3c3c" stroke-width="0.9" opacity="0.85">Binghamton</text>
<text transform="translate(1284.36,255.50) scale(0.9923,1)" font-size="20" fill="#d8d8d8">Binghamton</text>
<text transform="translate(1335.76,381.10) scale(0.9371,1)" font-size="20" fill="#3c3c3c" stroke="#3c3c3c" stroke-width="0.9" opacity="0.85">Scranton</text>
<text transform="translate(1334.66,380.00) scale(0.9371,1)" font-size="20" fill="#d8d8d8">Scranton</text>
<text transform="translate(1024.01,490.60) scale(0.9298,1)" font-size="20" fill="#4a3a3a" stroke="#4a3a3a" stroke-width="0.9" opacity="0.85">State College</text>
<text transform="translate(1022.91,489.50) scale(0.9298,1)" font-size="20" fill="#b4dcdc">State College</text>
<text transform="translate(969.05,544.10) scale(0.9587,1)" font-size="20" fill="#474747" stroke="#474747" stroke-width="0.9" opacity="0.85">Altoona</text>
<text transform="translate(967.95,543.00) scale(0.9587,1)" font-size="20" fill="#e0e0e0">Altoona</text>
<text transform="translate(739.47,556.60) scale(0.9868,1)" font-size="20" fill="#474747" stroke="#474747" stroke-width="0.9" opacity="0.85">Pittsburgh</text>
<text transform="translate(738.37,555.50) scale(0.9868,1)" font-size="20" fill="#dcdcdc">Pittsburgh</text>
<text transform="translate(1162.00,589.10) scale(0.9674,1)" font-size="20" fill="#474747" stroke="#474747" stroke-width="0.9" opacity="0.85">Harrisburg</text>
<text transform="translate(1160.90,588.00) scale(0.9674,1)" font-size="20" fill="#e0e0e0">Harrisburg</text>
<text transform="translate(1357.05,524.10) scale(0.9660,1)" font-size="20" fill="#474747" stroke="#474747" stroke-width="0.9" opacity="0.85">Allentown</text>
<text transform="translate(1355.95,523.00) scale(0.9660,1)" font-size="20" fill="#e6e6e6">Allentown</text>
<text transform="translate(1301.01,575.60) scale(0.9637,1)" font-size="20" fill="#474747" stroke="#474747" stroke-width="0.9" opacity="0.85">Reading</text>
<text transform="translate(1299.91,574.50) scale(0.9637,1)" font-size="20" fill="#e6e6e6">Reading</text>
<text transform="translate(1464.17,595.10) scale(0.9556,1)" font-size="20" fill="#474747" stroke="#474747" stroke-width="0.9" opacity="0.85">Trenton</text>
<text transform="translate(1463.07,594.00) scale(0.9556,1)" font-size="20" fill="#dcdcdc">Trenton</text>
<text transform="translate(1517.60,540.10) scale(0.9099,1)" font-size="20" fill="#3c3c3c" stroke="#3c3c3c" stroke-width="0.9" opacity="0.85">Edison</text>
<text transform="translate(1516.50,539.00) scale(0.9099,1)" font-size="20" fill="#d8d8d8">Edison</text>
<text transform="translate(1550.34,501.10) scale(0.9932,1)" font-size="21.5" fill="#3c3c3c" stroke="#3c3c3c" stroke-width="0.9" opacity="0.85">New</text>
<text transform="translate(1549.24,500.00) scale(0.9932,1)" font-size="21.5" fill="#dedede">New</text>
<text transform="translate(1380.29,644.10) scale(1.0182,1)" font-size="21.5" fill="#474747" stroke="#474747" stroke-width="0.9" opacity="0.85">Philadelphia</text>
<text transform="translate(1379.19,643.00) scale(1.0182,1)" font-size="21.5" fill="#dedede">Philadelphia</text>
<text transform="translate(1529.19,642.10) scale(0.9018,1)" font-size="20" fill="#3c3c3c" stroke="#3c3c3c" stroke-width="0.9" opacity="0.85">Toms River</text>
<text transform="translate(1528.09,641.00) scale(0.9018,1)" font-size="20" fill="#d8d8d8">Toms River</text>
<text transform="translate(1202.79,756.80) scale(0.9762,1)" font-size="20" fill="#3c3c3c" stroke="#3c3c3c" stroke-width="0.9" opacity="0.85">Baltimore</text>
<text transform="translate(1201.69,755.70) scale(0.9762,1)" font-size="20" fill="#d8d8d8">Baltimore</text>
<text transform="translate(1365.53,783.40) scale(0.9533,1)" font-size="20" fill="#3c3c3c" stroke="#3c3c3c" stroke-width="0.9" opacity="0.85">Dover</text>
<text transform="translate(1364.43,782.30) scale(0.9533,1)" font-size="20" fill="#d8d8d8">Dover</text>
<text transform="translate(1489.35,748.10) scale(0.9829,1)" font-size="20" fill="#3c3c3c" stroke="#3c3c3c" stroke-width="0.9" opacity="0.85">Atlantic City</text>
<text transform="translate(1488.25,747.00) scale(0.9829,1)" font-size="20" fill="#d8d8d8">Atlantic City</text>
<text transform="translate(1219.35,809.40) scale(0.9380,1)" font-size="20" fill="#3c3c3c" stroke="#3c3c3c" stroke-width="0.9" opacity="0.85">Annapolis</text>
<text transform="translate(1218.25,808.30) scale(0.9380,1)" font-size="20" fill="#d8d8d8">Annapolis</text>
<text transform="translate(1129.01,835.10) scale(0.9082,1)" font-size="20" fill="#3c3c3c" stroke="#3c3c3c" stroke-width="0.9" opacity="0.85">Washington</text>
<text transform="translate(1127.91,834.00) scale(0.9082,1)" font-size="20" fill="#d8d8d8">Washington</text>
<text transform="translate(423.61,498.10) scale(1.1051,1)" font-size="20" fill="#3c3c3c" stroke="#3c3c3c" stroke-width="0.9" opacity="0.85">nsfield</text>
<text transform="translate(422.51,497.00) scale(1.1051,1)" font-size="20" fill="#d8d8d8">nsfield</text>
</svg></div>
<div id="attr" class="abs"></div>
<div id="popup" class="abs"><div class="div"></div></div>
<div id="home" class="abs"></div>
<div id="zoom" class="abs"><div class="div"></div></div>
<div id="legend" class="abs"></div>
<div class="abs lg" style="left:479px;top:840px;width:335px;height:44px"></div>
<div class="abs lg" style="left:479px;top:886px;width:166px;height:52px"></div>
<div class="abs lg" style="left:650px;top:886px;width:238px;height:52px"></div>
<div class="abs lg" style="left:893px;top:886px;width:238px;height:52px"></div>
<div class="abs lg" style="left:1134px;top:886px;width:248px;height:52px"></div>
<div class="abs lg" style="left:1385px;top:878px;width:162px;height:56px"></div>
<div id="lu1" class="abs"></div><div id="lu2" class="abs"></div>
<svg id="ov" class="abs" width="1621" height="1080" viewBox="0 0 1621 1080">
<text transform="translate(20.44,42.00) scale(0.9867,1)" font-size="29" font-weight="400" fill="#c9c9c9" >Pennsylvania</text><text transform="translate(199.52,42.00) scale(1.0228,1)" font-size="29" font-weight="400" fill="#c9c9c9" >COVID-19</text><text transform="translate(345.17,42.00) scale(1.0581,1)" font-size="29" font-weight="400" fill="#c9c9c9" >Dashboard</text>
<text transform="translate(106.92,125.00) scale(1.0329,1)" font-size="28.6" font-weight="700" fill="#ff0000" >Confirmed</text><text transform="translate(260.89,125.00) scale(0.9715,1)" font-size="28.6" font-weight="700" fill="#ff0000" >Cases</text>
<text transform="translate(66.04,246.40) scale(1.0743,1)" font-size="66.4" font-weight="700" fill="#ff0000" >1,025,896</text>
<text transform="translate(117.52,380.40) scale(1.0261,1)" font-size="28.6" font-weight="700" fill="#ffa726" >Probable</text><text transform="translate(249.69,380.40) scale(0.9715,1)" font-size="28.6" font-weight="700" fill="#ffa726" >Cases</text>
<text transform="translate(67.44,508.20) scale(1.0416,1)" font-size="84" font-weight="700" fill="#ffa726" >200,710</text>
<text transform="translate(123.35,640.00) scale(1.0599,1)" font-size="28.6" font-weight="700" fill="#48fb35" >Negative</text><text transform="translate(256.43,640.00) scale(0.9502,1)" font-size="28.6" font-weight="700" fill="#48fb35" >Tests</text>
<text transform="translate(65.43,750.50) scale(1.0453,1)" font-size="68.2" font-weight="700" fill="#48fb35" >4,917,599</text>
<text transform="translate(175.00,875.70) scale(1.0365,1)" font-size="28.6" font-weight="700" fill="#bdbdbd" >Deaths</text>
<text transform="translate(67.93,1004.40) scale(1.0422,1)" font-size="98" font-weight="700" fill="#bdbdbd" >27,855</text>
<text transform="translate(509.88,218.00) scale(1.0722,1)" font-size="17.8" font-weight="400" fill="#b6b6b6" >Zoom</text><text transform="translate(562.71,218.00) scale(1.0911,1)" font-size="17.8" font-weight="400" fill="#b6b6b6" >to</text>
<text transform="translate(632.11,218.00) scale(0.9464,1)" font-size="17.8" font-weight="400" fill="#b6b6b6" >Pan</text>
<text transform="translate(476.77,298.60) scale(1.0157,1)" font-size="23" font-weight="700" fill="#d4d4d4" >Centre</text><text transform="translate(556.37,298.60) scale(1.0161,1)" font-size="23" font-weight="700" fill="#d4d4d4" >County</text>
<text transform="translate(489.50,343.30) scale(1.0595,1)" font-size="21" font-weight="400" fill="#cfcfcf" >Total</text><text transform="translate(539.97,343.30) scale(0.9820,1)" font-size="21" font-weight="400" fill="#cfcfcf" >Cases:</text><text transform="translate(608.39,343.30) scale(1.0235,1)" font-size="21" font-weight="400" fill="#cfcfcf" >17,070</text>
<text transform="translate(488.88,368.65) scale(1.0697,1)" font-size="21" font-weight="400" fill="#cfcfcf" >Confirmed:</text><text transform="translate(603.39,368.65) scale(1.0253,1)" font-size="21" font-weight="400" fill="#cfcfcf" >15,543</text>
<text transform="translate(488.18,394.00) scale(1.0515,1)" font-size="21" font-weight="400" fill="#cfcfcf" >Probable:</text><text transform="translate(587.41,394.00) scale(1.0075,1)" font-size="21" font-weight="400" fill="#cfcfcf" >1,527</text>
<text transform="translate(488.15,419.35) scale(1.0658,1)" font-size="21" font-weight="400" fill="#cfcfcf" >Negative:</text><text transform="translate(587.23,419.35) scale(1.0174,1)" font-size="21" font-weight="400" fill="#cfcfcf" >72,815</text>
<text transform="translate(488.98,444.70) scale(0.9697,1)" font-size="21" font-weight="400" fill="#cfcfcf" >Cases</text><text transform="translate(550.82,444.70) scale(1.0815,1)" font-size="21" font-weight="400" fill="#cfcfcf" >per</text><text transform="translate(589.06,444.70) scale(1.0424,1)" font-size="21" font-weight="400" fill="#cfcfcf" >100,000:</text><text transform="translate(678.41,444.70) scale(1.0105,1)" font-size="21" font-weight="400" fill="#cfcfcf" >10,512.1</text>
<text transform="translate(488.22,470.05) scale(1.0288,1)" font-size="21" font-weight="400" fill="#cfcfcf" >Deaths:</text><text transform="translate(567.21,470.05) scale(1.0401,1)" font-size="21" font-weight="400" fill="#cfcfcf" >228</text>
<text transform="translate(488.21,495.40) scale(1.0304,1)" font-size="21" font-weight="400" fill="#cfcfcf" >Deaths</text><text transform="translate(560.82,495.40) scale(1.0815,1)" font-size="21" font-weight="400" fill="#cfcfcf" >per</text><text transform="translate(599.36,495.40) scale(1.0437,1)" font-size="21" font-weight="400" fill="#cfcfcf" >100,000:</text><text transform="translate(688.38,495.40) scale(1.0258,1)" font-size="21" font-weight="400" fill="#cfcfcf" >140.4</text>
<g fill="none" stroke="#adadad" stroke-width="1.4" stroke-linecap="round"><circle cx="489.9" cy="209.8" r="7.6"/><path d="M495.5 215.4 L504 223.9 M485.9 209.8h8 M489.9 205.8v8"/></g>
<g fill="none" stroke="#adadad" stroke-width="1.4" stroke-linecap="round" stroke-linejoin="round"><path d="M604.9 212.4h20.8 M615.3 202v20.8 M611.7 205.6l3.6-3.6 3.6 3.6 M611.7 219.2l3.6 3.6 3.6-3.6 M608.5 208.8l-3.6 3.6 3.6 3.6 M622.1 208.8l3.6 3.6-3.6 3.6"/></g>
<path d="M922.4 278.2l17 17M939.4 278.2l-17 17" stroke="#c4c4c4" stroke-width="1.5" fill="none"/>
<text transform="translate(440.68,816.40) scale(0.9762,1)" font-size="17.6" font-weight="400" fill="#d0d0d0" >Esri,</text><text transform="translate(479.05,816.40) scale(0.9304,1)" font-size="17.6" font-weight="400" fill="#d0d0d0" >HERE,</text><text transform="translate(532.77,816.40) scale(1.0532,1)" font-size="17.6" font-weight="400" fill="#d0d0d0" >Garmin,</text><text transform="translate(601.80,816.40) scale(0.9531,1)" font-size="17.6" font-weight="400" fill="#d0d0d0" >USGS,</text><text transform="translate(658.09,816.40) scale(0.9700,1)" font-size="17.6" font-weight="400" fill="#d0d0d0" >EPA,</text><text transform="translate(700.30,816.40) scale(0.9627,1)" font-size="17.6" font-weight="400" fill="#d0d0d0" >NPS</text><text transform="translate(739.83,816.40) scale(0.9943,1)" font-size="17.6" font-weight="400" fill="#d0d0d0" >|</text><text transform="translate(747.80,816.40) scale(0.9669,1)" font-size="17.6" font-weight="400" fill="#d0d0d0" >Esri,</text><text transform="translate(785.87,816.40) scale(0.9146,1)" font-size="17.6" font-weight="400" fill="#d0d0d0" >HERE,</text><text transform="translate(839.10,816.40) scale(0.9656,1)" font-size="17.6" font-weight="400" fill="#d0d0d0" >NPS</text>
<text transform="translate(1462.29,816.00) scale(1.0392,1)" font-size="17.6" font-weight="400" fill="#d8d8d8" >Powered</text><text transform="translate(1538.74,816.00) scale(1.1047,1)" font-size="17.6" font-weight="400" fill="#d8d8d8" >by</text><text transform="translate(1563.56,816.00) scale(0.9936,1)" font-size="17.6" font-weight="400" fill="#d8d8d8" >Esri</text>
<path d="M1543.3 132.8 L1546.6 129.5 V122.3 H1550.2 V125.6 L1553.9 121.9 L1564.8 132.8 H1563.1 V142.6 H1556.7 V136.1 H1551.1 V142.6 H1545 V132.8 Z" fill="none" stroke="#1f8ee6" stroke-width="1.5" stroke-linejoin="miter"/>
<circle cx="1600.2" cy="94" r="12.6" fill="#303030" stroke="#9a9a9a" stroke-width="1.5"/>
<g stroke="#b5b5b5" stroke-width="1.2" fill="none"><path d="M1594 87.6l4 4M1594 91.5v-3.9h3.9 M1606.4 87.6l-4 4M1602.5 87.6h3.9v3.9 M1594 100.4l4-4M1594 96.5v3.9h3.9 M1606.4 100.4l-4-4M1606.4 96.5v3.9h-3.9"/></g>
<path d="M1542 704.7h23M1553.5 693.2v23M1542 752.2h23" stroke="#c4c4c4" stroke-width="1.4" fill="none"/>
<text transform="translate(483.30,873.00) scale(0.9702,1)" font-size="22.6" font-weight="400" fill="#b6b6b6" >Cases</text><text transform="translate(552.05,873.00) scale(1.0568,1)" font-size="22.6" font-weight="400" fill="#b6b6b6" >per</text><text transform="translate(594.70,873.00) scale(1.0607,1)" font-size="22.6" font-weight="400" fill="#b6b6b6" >100,000</text><text transform="translate(686.00,873.00) scale(1.0753,1)" font-size="22.6" font-weight="400" fill="#b6b6b6" >Population</text>
<path d="M486.3 893.3 L520.6 909.3 V926.3 H486.3 Z" fill="#dacdbb" stroke="#e2d8c9" stroke-width="1"/>
<text transform="translate(536.38,918.40) scale(1.0646,1)" font-size="24" font-weight="400" fill="#b6b6b6" >0</text><text transform="translate(557.70,918.40) scale(0.5105,1)" font-size="24" font-weight="400" fill="#b6b6b6" >–</text><text transform="translate(571.40,918.40) scale(0.9990,1)" font-size="24" font-weight="400" fill="#b6b6b6" >7,500</text>
<path d="M662.2 893.3 L696.5 909.3 V926.3 H662.2 Z" fill="#d9b07e" stroke="#e0bd92" stroke-width="1"/>
<text transform="translate(712.40,918.40) scale(1.1684,1)" font-size="24" font-weight="400" fill="#b6b6b6" >&gt;</text><text transform="translate(734.32,918.40) scale(0.9834,1)" font-size="24" font-weight="400" fill="#b6b6b6" >7,500</text><text transform="translate(801.50,918.40) scale(0.5480,1)" font-size="24" font-weight="400" fill="#b6b6b6" >–</text><text transform="translate(814.58,918.40) scale(1.0045,1)" font-size="24" font-weight="400" fill="#b6b6b6" >8,500</text>
<path d="M903.8 893.3 L938.0999999999999 909.3 V926.3 H903.8 Z" fill="#d97f55" stroke="#e09570" stroke-width="1"/>
<text transform="translate(954.08,918.40) scale(1.0997,1)" font-size="24" font-weight="400" fill="#b6b6b6" >&gt;</text><text transform="translate(974.96,918.40) scale(1.0217,1)" font-size="24" font-weight="400" fill="#b6b6b6" >8,500</text><text transform="translate(1043.20,918.40) scale(0.5105,1)" font-size="24" font-weight="400" fill="#b6b6b6" >–</text><text transform="translate(1056.26,918.40) scale(0.9997,1)" font-size="24" font-weight="400" fill="#b6b6b6" >9,500</text>
<path d="M1141.6 892.6 L1175.8999999999999 908.6 V925.6 H1141.6 Z" fill="#c34a36" stroke="#cf6a58" stroke-width="1"/>
<text transform="translate(1191.77,917.60) scale(1.1082,1)" font-size="24" font-weight="400" fill="#b6b6b6" >&gt;</text><text transform="translate(1212.53,917.60) scale(1.0238,1)" font-size="24" font-weight="400" fill="#b6b6b6" >9,500</text><text transform="translate(1280.90,917.60) scale(0.5180,1)" font-size="24" font-weight="400" fill="#b6b6b6" >–</text><text transform="translate(1294.20,917.60) scale(1.0017,1)" font-size="24" font-weight="400" fill="#b6b6b6" >10,500</text>
<path d="M1392.4 889 L1426.7 905 V922 H1392.4 Z" fill="#a00808" stroke="#b85a5a" stroke-width="1"/>
<text transform="translate(1443.22,914.60) scale(1.0653,1)" font-size="24" font-weight="400" fill="#b6b6b6" >&gt;</text><text transform="translate(1464.70,914.60) scale(1.0017,1)" font-size="24" font-weight="400" fill="#b6b6b6" >10,500</text>
<text transform="translate(441.08,990.30) scale(0.9849,1)" font-size="20.6" font-weight="400" font-style="italic" fill="#c6c6c6" >Case</text><text transform="translate(493.30,990.30) scale(1.0453,1)" font-size="20.6" font-weight="400" font-style="italic" fill="#c6c6c6" >count</text><text transform="translate(552.29,990.30) scale(1.0608,1)" font-size="20.6" font-weight="400" font-style="italic" fill="#c6c6c6" >data,</text><text transform="translate(604.22,990.30) scale(1.0438,1)" font-size="20.6" font-weight="400" font-style="italic" fill="#c6c6c6" >map</text><text transform="translate(651.53,990.30) scale(1.0159,1)" font-size="20.6" font-weight="400" font-style="italic" fill="#c6c6c6" >and</text><text transform="translate(693.65,990.30) scale(0.9761,1)" font-size="20.6" font-weight="400" font-style="italic" fill="#c6c6c6" >new</text><text transform="translate(737.65,990.30) scale(0.9709,1)" font-size="20.6" font-weight="400" font-style="italic" fill="#c6c6c6" >cases</text><text transform="translate(795.53,990.30) scale(1.0322,1)" font-size="20.6" font-weight="400" font-style="italic" fill="#c6c6c6" >per</text><text transform="translate(831.84,990.30) scale(0.9887,1)" font-size="20.6" font-weight="400" font-style="italic" fill="#c6c6c6" >day</text><text transform="translate(871.00,990.30) scale(1.0509,1)" font-size="20.6" font-weight="400" font-style="italic" fill="#c6c6c6" >data</text><text transform="translate(918.48,990.30) scale(1.0731,1)" font-size="20.6" font-weight="400" font-style="italic" fill="#c6c6c6" >from</text><text transform="translate(968.11,990.30) scale(0.9582,1)" font-size="20.6" font-weight="400" font-style="italic" fill="#c6c6c6" >PA-NEDSS.</text><text transform="translate(1083.38,990.30) scale(1.0044,1)" font-size="20.6" font-weight="400" font-style="italic" fill="#c6c6c6" >Deaths</text><text transform="translate(1155.22,990.30) scale(0.9130,1)" font-size="20.6" font-weight="400" font-style="italic" fill="#c6c6c6" >by</text><text transform="translate(1182.83,990.30) scale(1.0066,1)" font-size="20.6" font-weight="400" font-style="italic" fill="#c6c6c6" >day</text>
<text transform="translate(442.15,1015.30) scale(1.0637,1)" font-size="20.6" font-weight="400" font-style="italic" fill="#c6c6c6" >graph</text><text transform="translate(503.30,1015.30) scale(1.0509,1)" font-size="20.6" font-weight="400" font-style="italic" fill="#c6c6c6" >data</text><text transform="translate(550.27,1015.30) scale(1.0858,1)" font-size="20.6" font-weight="400" font-style="italic" fill="#c6c6c6" >from</text><text transform="translate(599.42,1015.30) scale(0.9366,1)" font-size="20.6" font-weight="400" font-style="italic" fill="#c6c6c6" >EDRS.</text>
<text transform="translate(1314.19,996.80) scale(0.9691,1)" font-size="17.6" font-weight="400" fill="#c4c4c4" >Last</text><text transform="translate(1351.59,996.80) scale(1.1067,1)" font-size="17.6" font-weight="400" fill="#c4c4c4" >Updated</text>
<text transform="translate(1457.25,996.80) scale(1.0640,1)" font-size="17.6" font-weight="400" fill="#c4c4c4" >August</text><text transform="translate(1520.87,996.80) scale(1.0810,1)" font-size="17.6" font-weight="400" fill="#c4c4c4" >1,</text>
<text transform="translate(1456.37,1017.30) scale(1.0615,1)" font-size="17.6" font-weight="400" fill="#c4c4c4" >2021</text>
</svg>
</body></html>
